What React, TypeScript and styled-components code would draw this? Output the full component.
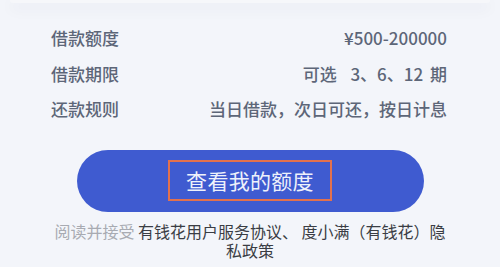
import React from 'react';
import styled, { createGlobalStyle } from 'styled-components';

const GlobalStyle = createGlobalStyle`
  html, body {
    margin: 0;
    padding: 0;
    background: #f3f5fa;
  }
  body {
    font-family: "Noto Sans CJK SC", "Noto Sans", sans-serif;
  }
`;

const Page = styled.div`
  width: 500px;
  height: 267px;
  overflow: hidden;
  background: #f3f5fa;
  display: flex;
  flex-direction: column;
`;

const TopCard = styled.div`
  height: 3px;
  margin: 0 10px;
  background: #f6f7fa;
  border-radius: 0 0 14px 14px;
  box-shadow: 0 5px 14px rgba(40, 50, 80, 0.1);
`;

const InfoList = styled.div`
  margin-top: 17px;
  padding: 0 53px 0 51px;
  display: flex;
  flex-direction: column;
`;

const Row = styled.div`
  height: 35.5px;
  display: flex;
  align-items: center;
  justify-content: space-between;
  font-size: 17px;
  font-weight: 500;
  color: #5d6678;
`;

const Value = styled.span`
  word-spacing: 3px;
  white-space: pre;
`;

const Button = styled.button`
  margin: 23px auto 0;
  width: 347px;
  height: 62px;
  border: none;
  border-radius: 31px;
  background: #3f5bd0;
  display: flex;
  align-items: center;
  justify-content: center;
  font-family: inherit;
  padding: 0;
`;

const Highlight = styled.span`
  border: 2.5px solid #e2714d;
  padding: 4px 16px 5px;
  font-size: 21px;
  line-height: 28px;
  color: #eef1fb;
  letter-spacing: 0.3px;
`;

const Agreement = styled.p`
  margin: 10px auto 0;
  width: 396px;
  text-align: center;
  font-size: 16px;
  line-height: 19px;
  color: #3a3d44;
`;

const Muted = styled.span`
  color: #a8abb2;
`;

export default function App() {
  return (
    <Page>
      <GlobalStyle />
      <TopCard />
      <InfoList>
        <Row>
          <span>借款额度</span>
          <Value>¥500-200000</Value>
        </Row>
        <Row>
          <span>借款期限</span>
          <Value>{'可选  3、6、12 期'}</Value>
        </Row>
        <Row>
          <span>还款规则</span>
          <Value>当日借款，次日可还，按日计息</Value>
        </Row>
      </InfoList>
      <Button>
        <Highlight>查看我的额度</Highlight>
      </Button>
      <Agreement>
        <Muted>阅读并接受</Muted> 有钱花用户服务协议、 度小满（有钱花）隐私政策
      </Agreement>
    </Page>
  );
}
